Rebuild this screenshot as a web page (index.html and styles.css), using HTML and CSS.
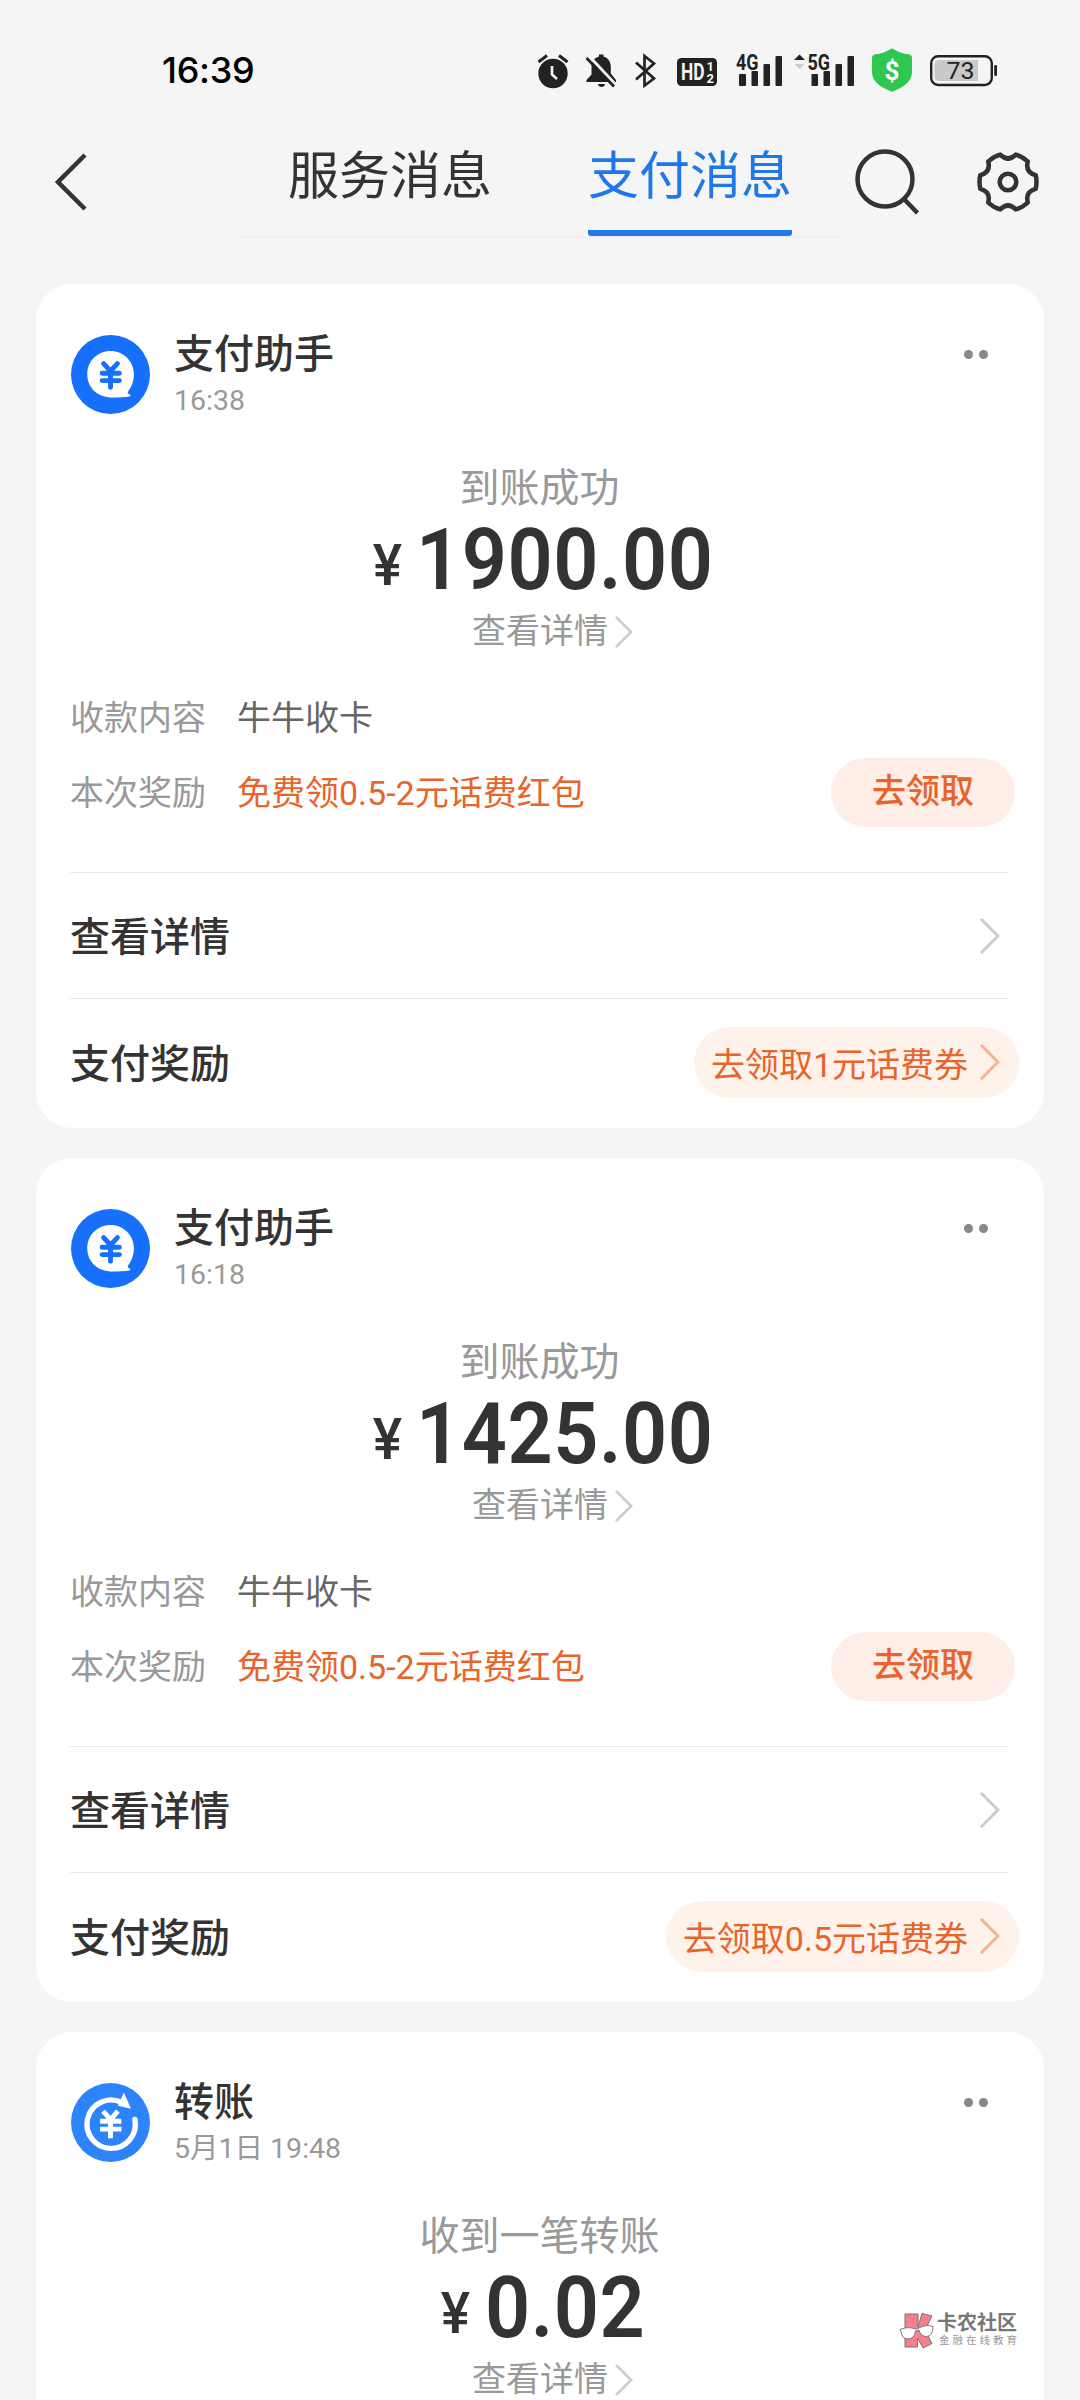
FILE: index.html
```html
<!DOCTYPE html>
<html lang="zh-CN">
<head>
<meta charset="utf-8">
<title>支付消息</title>
<link rel="stylesheet" href="styles.css">
</head>
<body>
<svg width="0" height="0" class="defs" aria-hidden="true">
  <symbol id="chev" viewBox="0 0 20 36"><path d="M1.8 1.8 18 18 1.8 34.2" fill="none" stroke="currentColor" stroke-width="3" stroke-linecap="round"/></symbol>
  <symbol id="bubble" viewBox="0 0 80 80">
    <circle cx="40" cy="40" r="40" fill="#1670fb"/>
    <path d="M40 16.3C26.800 16.300 16.500 26.600 16.500 39.700C16.500 53.500 27 63.300 42 63.300C48 63.300 54 63 59 62.200C60.800 61.900 60.800 61 59.300 60.300C57.300 59.400 57 58.400 58 57C61.500 52.200 63.700 46.500 63.700 40C63.700 26.600 53.200 16.300 40 16.300Z" fill="#fff"/>
    <path d="M33 29 40 36.500 47 29M40 36.500V53M31.500 38.700H49M31.500 46.200H49" fill="none" stroke="#1670fb" stroke-width="5" stroke-linecap="round"/>
  </symbol>
  <symbol id="transfer" viewBox="0 0 80 80">
    <circle cx="40" cy="40" r="40" fill="#2c83fb"/>
    <path d="M51 19.500A24.500 24.500 0 1 0 64.700 37" fill="none" stroke="#fff" stroke-width="5.500" stroke-linecap="round"/>
    <path d="M53.500 11.500 59.500 25 48.500 22.500Z" fill="#fff" stroke="#fff" stroke-width="1.500"/>
    <path d="M32.500 28.500 40 37 47.500 28.500M40 36.500V56M29.500 38.700H51M29.500 46.700H51" fill="none" stroke="#fff" stroke-width="5"/>
  </symbol>
</svg>
<div class="screen">
  <header class="status">
    <span class="clock">16:39</span>
    <svg class="status-icons" viewBox="530 40 480 60" width="480" height="60">
      <g fill="#222">
        <circle cx="553" cy="73.500" r="14.700"/>
        <path d="M538.500 62 547 55.500M567.500 62 559 55.500" stroke="#222" stroke-width="3"/>
        <path d="M552 66V74.500L557 79" fill="none" stroke="#f5f5f5" stroke-width="2.600"/>
        <path d="M599 56.500V54.500H603.500V56.500C608.500 58 610.800 62 610.800 67V73.500L616 80V82H586.500V80L591.500 74.500V67C591.500 61.500 594 58 599 56.500ZM598 84H605C605 88 598 88 598 84Z"/>
        <path d="M589.500 56.500 616 85" stroke="#f5f5f5" stroke-width="3"/>
        <path d="M586.500 58 614 86.500" stroke="#222" stroke-width="2.600"/>
        <path d="M636 62.500 654 78.500 644.500 85.500V56L654 63.500 636 79.500" fill="none" stroke="#222" stroke-width="2.700"/>
        <rect x="677" y="58" width="40" height="28" rx="4.500"/>
        <rect x="739" y="74" width="7" height="12" rx="1"/><rect x="751.500" y="71" width="6.500" height="15" rx="1"/><rect x="763.500" y="64" width="6.500" height="22" rx="1"/><rect x="775.500" y="56" width="6.500" height="30" rx="1"/>
        <rect x="811.500" y="74" width="6.500" height="12" rx="1"/><rect x="823.500" y="71" width="6.500" height="15" rx="1"/><rect x="835.500" y="64" width="6.500" height="22" rx="1"/><rect x="847.500" y="56" width="6.500" height="30" rx="1"/>
        <path d="M794 60 799.500 54.500 805 60Z"/><path d="M794.500 64H804.500L799.500 69Z" fill="#ccc"/>
        <rect x="994.200" y="65" width="2.800" height="11" rx="1.200"/>
      </g>
      <path d="M892 48.300Q900 53.500 909.500 54.500 912 55 912 57.500V72C912 82 903 87.500 892 91.700 881 87.500 872 82 872 72V57.500Q872 55 874.500 54.500 884 53.500 892 48.300Z" fill="#30c750"/>
      <rect x="931.200" y="56.200" width="60.600" height="28.800" rx="7" fill="none" stroke="#222" stroke-width="2.400"/>
      <path d="M978 60V81H939Q934.500 81 934.500 76.500V64.500Q934.500 60 939 60Z" fill="#c9c9c9"/>
      <g class="glyphs">
        <text x="681" y="80" font-size="23" textLength="23.500" lengthAdjust="spacingAndGlyphs" fill="#f5f5f5">HD</text>
        <text x="706.500" y="71" font-size="13" fill="#f5f5f5">1</text><text x="706.500" y="83.300" font-size="13" fill="#f5f5f5">2</text>
        <text x="736" y="69.500" font-size="21.500" textLength="22.500" lengthAdjust="spacingAndGlyphs">4G</text>
        <text x="807.500" y="69.500" font-size="21.500" textLength="22.500" lengthAdjust="spacingAndGlyphs">5G</text>
        <text x="884.500" y="79.500" font-size="26" fill="#fff">$</text>
        <text x="946.500" y="79.300" font-size="24.500" class="batt" textLength="28" lengthAdjust="spacingAndGlyphs">73</text>
      </g>
    </svg>
  </header>
  <nav class="nav">
    <svg class="back" viewBox="0 0 36 60" width="36" height="60"><path d="M33 3 6 30 33 57" fill="none" stroke="#333" stroke-width="4.500"/></svg>
    <div class="tabs"><span class="tab">服务消息</span><span class="tab active">支付消息</span></div>
    <svg class="search" viewBox="0 0 66 68" width="66" height="68" fill="none" stroke="#333" stroke-width="4.500"><circle cx="31" cy="31" r="27.500"/><path d="M50 51 63.500 65"/></svg>
    <svg class="gear" viewBox="-32 -32 64 64" width="64" height="64" fill="none" stroke="#333" stroke-width="4.500" stroke-linejoin="round"><circle r="8.300"/><path d="M27.650-6.900A28.500 28.500 0 0 1 27.650 6.900Q17 9.800 19.800 20.500A28.500 28.500 0 0 1 7.860 27.400Q0 19.600-7.860 27.400A28.500 28.500 0 0 1-19.800 20.500Q-17 9.800-27.650 6.900A28.500 28.500 0 0 1-27.650-6.900Q-17-9.800-19.800-20.500A28.500 28.500 0 0 1-7.860-27.400Q0-19.600 7.860-27.400A28.500 28.500 0 0 1 19.800-20.500Q17-9.800 27.650-6.900Z"/></svg>
  </nav>
  <main class="feed">
    <article class="card">
      <div class="head"><svg class="avatar"><use href="#bubble"/></svg><div class="who"><b class="name">支付助手</b><span class="time">16:38</span></div><span class="more"><i></i><i></i></span></div>
      <div class="label">到账成功</div>
      <div class="amount"><span class="yen">¥</span><span class="num">1900.00</span></div>
      <div class="detail">查看详情<svg class="chev-s"><use href="#chev"/></svg></div>
      <div class="info"><span class="key">收款内容</span><span class="val">牛牛收卡</span></div>
      <div class="info reward"><span class="key">本次奖励</span><span class="val orange">免费领0.5-2元话费红包</span><span class="btn">去领取</span></div>
      <div class="row"><b>查看详情</b><svg class="chev"><use href="#chev"/></svg></div>
      <div class="row last"><b>支付奖励</b><span class="pill">去领取1元话费券<svg class="chev"><use href="#chev"/></svg></span></div>
    </article>
    <article class="card">
      <div class="head"><svg class="avatar"><use href="#bubble"/></svg><div class="who"><b class="name">支付助手</b><span class="time">16:18</span></div><span class="more"><i></i><i></i></span></div>
      <div class="label">到账成功</div>
      <div class="amount"><span class="yen">¥</span><span class="num">1425.00</span></div>
      <div class="detail">查看详情<svg class="chev-s"><use href="#chev"/></svg></div>
      <div class="info"><span class="key">收款内容</span><span class="val">牛牛收卡</span></div>
      <div class="info reward"><span class="key">本次奖励</span><span class="val orange">免费领0.5-2元话费红包</span><span class="btn">去领取</span></div>
      <div class="row"><b>查看详情</b><svg class="chev"><use href="#chev"/></svg></div>
      <div class="row last"><b>支付奖励</b><span class="pill">去领取0.5元话费券<svg class="chev"><use href="#chev"/></svg></span></div>
    </article>
    <article class="card">
      <div class="head"><svg class="avatar"><use href="#transfer"/></svg><div class="who"><b class="name">转账</b><span class="time">5月1日 19:48</span></div><span class="more"><i></i><i></i></span></div>
      <div class="label">收到一笔转账</div>
      <div class="amount short"><span class="yen">¥</span><span class="num">0.02</span></div>
      <div class="detail">查看详情<svg class="chev-s"><use href="#chev"/></svg></div>
    </article>
  </main>
  <div class="watermark">
    <svg viewBox="0 0 36 38" width="36" height="38">
      <g fill="#f77f8c" stroke="#777" stroke-width="1"><path d="M6 2H19V15L23 1.500 33 4 26 18 33 31.500 24 36 18.500 26V35H6Z"/></g>
      <path d="M1 17.500Q9 14 16.500 17L20 16Q27 12 34 14.500 34 24 27.500 24.500 21.500 24.500 20 18L16.500 19Q15.500 27 9 27 3 27 2 19.500Z" fill="#fff" stroke="#777"/>
    </svg>
    <div class="wm-text"><span class="wm-title">卡农社区</span><span class="wm-sub">金融在线教育</span></div>
  </div>
</div>
</body>
</html>
```
FILE: styles.css
```css
* { box-sizing: border-box; }
html, body { margin: 0; height: 2400px; overflow: hidden; }
body { background: #f5f5f5; color: #333; font-family: Roboto, "Noto Sans CJK SC", sans-serif; }
.defs { position: absolute; }
.screen { position: relative; width: 1080px; height: 2400px; overflow: hidden; display: flex; flex-direction: column; }
svg { display: block; flex: none; }

.status { display: flex; flex: none; height: 110px; padding: 40px 70px 0 162px; justify-content: space-between; }
.clock { font: 500 36px/60px Inter, sans-serif; letter-spacing: -0.3px; color: #000; }
.glyphs { font-family: Roboto, sans-serif; font-weight: 700; fill: #222; }
.glyphs .batt { font-weight: 400; }

.nav { display: flex; flex: none; height: 174px; padding-left: 52px; align-items: flex-start; }
.back { margin: 42px 152px 0 0; }
.tabs { display: flex; width: 600px; height: 128px; border-bottom: 2px solid #f0f0f0; justify-content: space-around; }
.tab { height: 126px; padding-top: 8px; font-size: 51px; line-height: 118px; color: #333; }
.tab.active { color: #1e78ec; background: linear-gradient(#1e78ec, #1e78ec) bottom / 100% 6px no-repeat; border-radius: 3px; }
.search { margin: 38px 0 0 14px; }
.gear { margin: 40px 0 0 56px; }

.feed { display: flex; flex-direction: column; gap: 30px; padding: 0 36px; }
.card { height: 844px; flex: none; background: #fff; border-radius: 36px; padding: 43px 35px 0 34px; display: flex; flex-direction: column; }
.head { display: flex; height: 133px; }
.avatar { width: 79px; height: 79px; margin: 8px 24px 0 1px; }
.who { flex: 1; display: flex; flex-direction: column; }
.name { font-size: 40px; line-height: 55px; font-weight: 500; }
.time { font-size: 28.5px; line-height: 36px; color: #999; padding-top: 1px; }
.more { display: flex; gap: 6px; margin: 23px 21px 0 0; }
.more i { width: 9px; height: 9px; border-radius: 50%; background: #888; }
.label { height: 56px; line-height: 57px; font-size: 40px; color: #999; text-align: center; }
.amount { height: 89px; line-height: 88px; display: flex; justify-content: center; padding-left: 6px; }
.yen { font-size: 57px; font-weight: 500; padding: 6px 14px 0 0; transform: scaleX(0.97); }
.num { font-size: 86px; font-weight: 600; letter-spacing: 0.6px; margin: 0 -13px; transform: scaleX(0.92); }
.short .num { margin: 0 -7px; }
.detail { height: 51px; line-height: 51px; padding-top: 2px; font-size: 34px; color: #999; display: flex; justify-content: center; align-items: center; padding-left: 26px; }
.chev-s { width: 18px; height: 32px; margin-left: 7px; color: #ccc; }
.info { display: flex; align-items: center; height: 76px; margin-top: 21px; font-size: 34px; }
.info.reward { margin-top: 0; height: 119px; padding-bottom: 45px; }
.key { width: 167px; color: #999; }
.val { flex: 1; color: #666; }
.val.orange { color: #e8642a; }
.btn { width: 184px; height: 69px; line-height: 66px; margin: 4px -6px 0 0; border-radius: 35px; background: #ffeee8; color: #e8642a; text-align: center; font-weight: 500; }
.row { height: 126px; border-top: 1px solid #e9e9e9; display: flex; align-items: center; justify-content: space-between; font-size: 40px; }
.row b { font-weight: 500; margin-bottom: 3px; }
.row.last { padding-top: 1px; }
.row .chev { width: 20px; height: 36px; color: #ccc; margin-right: 9px; }
.pill { height: 71px; display: flex; align-items: center; padding: 0 10px 0 17px; margin-right: -10px; border-radius: 36px; background: #fff2ea; color: #e8642a; font-size: 34px; }
.pill .chev { margin-left: 12px; color: #f5b48f; }

.watermark { position: absolute; left: 899px; top: 2312px; display: flex; gap: 2px; }
.wm-text { display: flex; flex-direction: column; white-space: nowrap; }
.wm-title { font-size: 20px; line-height: 22px; font-weight: 700; color: #777; }
.wm-sub { font-size: 10.5px; line-height: 13px; letter-spacing: 3px; color: #999; padding-left: 2px; }
```
